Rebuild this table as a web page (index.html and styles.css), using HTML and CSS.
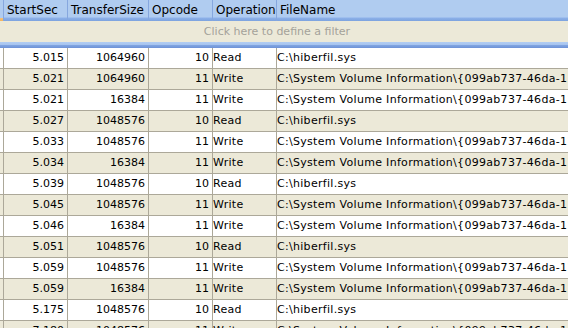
FILE: index.html
```html
<!DOCTYPE html>
<html lang="en">
<head>
  <meta charset="UTF-8" />
  <title>Trace grid</title>
  <link rel="stylesheet" href="styles.css">
</head>
<body>
  <table class="grid">
    <colgroup>
      <col class="c-ind">
      <col class="c-sec">
      <col class="c-size">
      <col class="c-op">
      <col class="c-oper">
      <col class="c-file">
    </colgroup>
    <thead>
      <tr class="head">
        <th class="ind"></th>
        <th>StartSec</th>
        <th>TransferSize</th>
        <th>Opcode</th>
        <th>Operation</th>
        <th class="last">FileName</th>
      </tr>
      <tr class="filter">
        <td colspan="6">Click here to define a filter</td>
      </tr>
      <tr class="sep">
        <td colspan="6"></td>
      </tr>
    </thead>
    <tbody id="rows"></tbody>
  </table>

<script>
  const sysvol = "C:\\System Volume Information\\{099ab737-46da-11d5-a5c8-000c29c3a1f0}";
  const hiber = "C:\\hiberfil.sys";
  const filas = [
    ["5.015", "1064960", "10", "Read", hiber],
    ["5.021", "1064960", "11", "Write", sysvol],
    ["5.021", "16384", "11", "Write", sysvol],
    ["5.027", "1048576", "10", "Read", hiber],
    ["5.033", "1048576", "11", "Write", sysvol],
    ["5.034", "16384", "11", "Write", sysvol],
    ["5.039", "1048576", "10", "Read", hiber],
    ["5.045", "1048576", "11", "Write", sysvol],
    ["5.046", "16384", "11", "Write", sysvol],
    ["5.051", "1048576", "10", "Read", hiber],
    ["5.059", "1048576", "11", "Write", sysvol],
    ["5.059", "16384", "11", "Write", sysvol],
    ["5.175", "1048576", "10", "Read", hiber],
    ["7.180", "1048576", "11", "Write", sysvol]
  ];

  const cuerpo = document.getElementById("rows");
  filas.forEach(fila => {
    const tr = document.createElement("tr");
    tr.appendChild(document.createElement("td"));
    fila.forEach((valor, i) => {
      const td = document.createElement("td");
      td.textContent = valor;
      td.className = i < 3 ? "num" : "txt";
      tr.appendChild(td);
    });
    cuerpo.appendChild(tr);
  });
</script>
</body>
</html>
```

FILE: styles.css
```css
body {
  margin: 0;
  background-color: #ffffff;
  overflow: hidden;
}
.grid {
  width: 100%;
  table-layout: fixed;
  border-collapse: separate;
  border-spacing: 0;
  font-family: "DejaVu Sans", sans-serif;
  font-size: 11px;
  color: #000;
}
.c-ind { width: 4px; }
.c-sec { width: 64px; }
.c-size { width: 81px; }
.c-op { width: 64px; }
.c-oper { width: 64px; }
.grid th, .grid td {
  box-sizing: border-box;
  padding: 0;
  white-space: nowrap;
  overflow: hidden;
}
.head th {
  height: 21px;
  padding: 2px 3px 0 3px;
  text-align: left;
  font-weight: normal;
  font-size: 12px;
  line-height: 17px;
  vertical-align: top;
  border-right: 1px solid #86a7de;
  background: linear-gradient(to bottom, #b0ccf0 0, #b0ccf0 17px, #9fbfee 17px, #9fbfee 18px, #8cb0e8 18px, #7da3df 21px);
}
.head th.ind {
  padding: 0;
  background: linear-gradient(to bottom, #b0ccf0 0, #b0ccf0 18px, #f6c27a 18px, #f0b35e 21px);
}
.head th.last {
  border-right: none;
}
.filter td {
  height: 21px;
  padding: 2px 14px 0 0;
  line-height: 17px;
  vertical-align: top;
  text-align: center;
  color: #a4a29a;
  background-color: #ece9d8;
}
.sep td {
  height: 6px;
  background: linear-gradient(to bottom, #b2cdf2 0, #a5c3ef 3px, #83a7e2 3px, #6c91d7 6px);
}
tbody td {
  height: 21px;
  padding: 1px 2px 0 2px;
  line-height: 19px;
  vertical-align: top;
  border-right: 1px solid #aca899;
  border-bottom: 1px solid #aca899;
  background-color: #ffffff;
}
tbody tr:nth-child(even) td {
  background-color: #ece9d8;
}
tbody td.num {
  text-align: right;
  padding-right: 3px;
}
tbody td.txt {
  letter-spacing: 0.3px;
}
tbody td:last-child {
  border-right: none;
}
```
